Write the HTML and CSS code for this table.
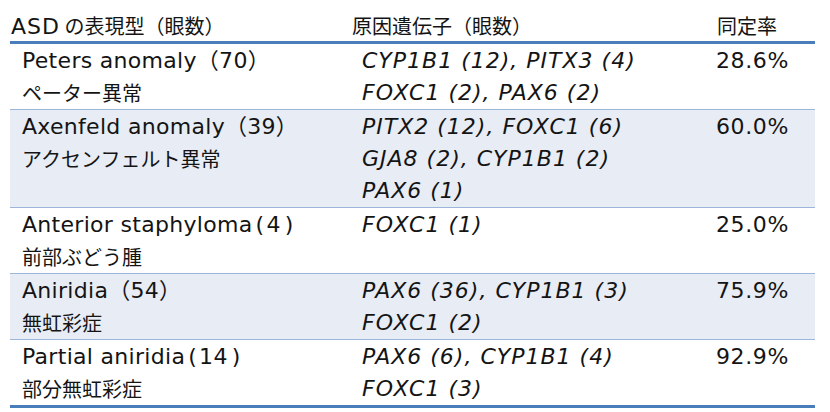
FILE: index.html
```html
<!DOCTYPE html>
<html lang="ja">
<head>
<meta charset="utf-8">
<title>ASD</title>
<link rel="stylesheet" href="styles.css">
</head>
<body>
<div class="table">
  <div class="row head">
    <div class="c1"><span class="hen">ASD</span> の表現型（眼数）</div>
    <div class="c2">原因遺伝子（眼数）</div>
    <div class="c3">同定率</div>
  </div>
  <div class="row">
    <div class="c1"><div class="en">Peters anomaly（70）</div><div class="ja">ペーター異常</div></div>
    <div class="c2 gene"><div>CYP1B1 (12), PITX3 (4)</div><div>FOXC1 (2), PAX6 (2)</div></div>
    <div class="c3 pct">28.6%</div>
  </div>
  <div class="row shade">
    <div class="c1"><div class="en">Axenfeld anomaly（39）</div><div class="ja">アクセンフェルト異常</div></div>
    <div class="c2 gene"><div>PITX2 (12), FOXC1 (6)</div><div>GJA8 (2), CYP1B1 (2)</div><div>PAX6 (1)</div></div>
    <div class="c3 pct">60.0%</div>
  </div>
  <div class="row">
    <div class="c1"><div class="en">Anterior staphyloma<span class="lp">(</span>4<span class="rp">)</span></div><div class="ja">前部ぶどう腫</div></div>
    <div class="c2 gene"><div>FOXC1 (1)</div></div>
    <div class="c3 pct">25.0%</div>
  </div>
  <div class="row shade">
    <div class="c1"><div class="en">Aniridia（54）</div><div class="ja">無虹彩症</div></div>
    <div class="c2 gene"><div>PAX6 (36), CYP1B1 (3)</div><div>FOXC1 (2)</div></div>
    <div class="c3 pct">75.9%</div>
  </div>
  <div class="row last">
    <div class="c1"><div class="en">Partial aniridia<span class="lp">(</span>14<span class="rp">)</span></div><div class="ja">部分無虹彩症</div></div>
    <div class="c2 gene"><div>PAX6 (6), CYP1B1 (4)</div><div>FOXC1 (3)</div></div>
    <div class="c3 pct">92.9%</div>
  </div>
</div>
</body>
</html>
```
FILE: styles.css
```css
html, body {
  margin: 0;
  padding: 0;
  background: #ffffff;
}
body {
  font-family: "DejaVu Sans", "Noto Sans CJK JP", sans-serif;
  font-size: 22px;
  color: #141414;
}
.table {
  margin-left: 10px;
  width: 805px;
}
.row {
  display: grid;
  grid-template-columns: 342px 364px 1fr;
  padding-top: 1px;
  line-height: 32px;
  border-bottom: 1px solid #9db5d8;
}
.row.shade {
  background: #e8ecf4;
}
.row.last {
  border-bottom: 3px solid #4a7ebb;
}
.row.head {
  padding-top: 12px;
  line-height: 28px;
  font-size: 20px;
  font-family: "Noto Sans CJK JP", sans-serif;
  border-bottom: 3px solid #4a7ebb;
}
.hen {
  font-family: "DejaVu Sans", sans-serif;
  font-size: 22px;
  letter-spacing: 1px;
}
.head .c1 { padding-left: 1px; }
.head .c2 { padding-left: 0; }
.head .c3 { padding-left: 1px; }
.c1 { padding-left: 12px; }
.c2 { padding-left: 10px; }
.c3 { padding-left: 0; }
.en {
  letter-spacing: 0.3px;
}
.lp {
  margin-left: 3px;
  margin-right: 2px;
}
.rp {
  margin-left: 4px;
}
.ja {
  font-family: "Noto Sans CJK JP", sans-serif;
  font-size: 20px;
}
.gene {
  font-style: italic;
  letter-spacing: 1px;
}
.pct {
  letter-spacing: 0.6px;
}
```
